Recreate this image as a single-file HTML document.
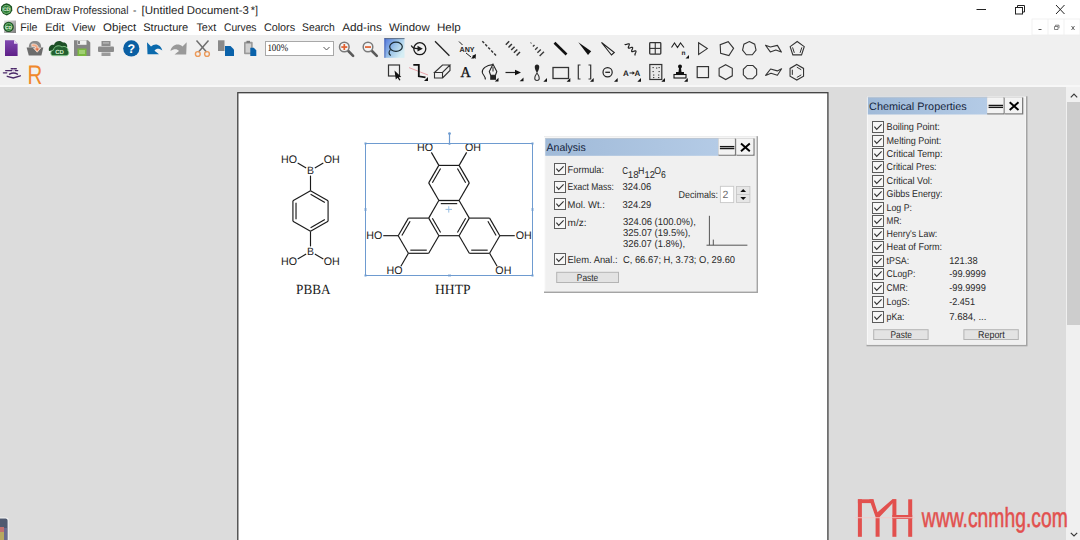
<!DOCTYPE html>
<html><head><meta charset="utf-8"><style>
html,body{margin:0;padding:0;width:1080px;height:540px;overflow:hidden;background:#dcdcdc;}
svg{display:block;}
</style></head><body>
<svg width="1080" height="540" viewBox="0 0 1080 540" shape-rendering="geometricPrecision" text-rendering="geometricPrecision">
<rect x="0" y="0" width="1080" height="35" fill="#ffffff" />
<rect x="0" y="35" width="1080" height="52" fill="#f0f0f0" />
<rect x="0" y="85" width="1080" height="2" fill="#f7f7f7" />
<rect x="0" y="87" width="1080" height="453" fill="#dcdcdc" />
<g>
<polygon points="6.5,3.3 9.5,4.3 12,6.5 12.3,10.5 10.5,13.5 6.8,15.6 3,13.8 1,10.5 1.2,6.5 3.5,4.3" fill="#1b5222"/>
<circle cx="6.6" cy="9.4" r="4.0" fill="#2a7a33" stroke="#86c888" stroke-width="0.9"/>
<text x="6.60" y="11.30" font-size="5" fill="#e8f8e0" font-family='"Liberation Sans", sans-serif' font-weight="bold" text-anchor="middle" >CD</text>
</g>
<text x="16.60" y="13.70" font-size="11.3" fill="#262626" font-family='"Liberation Sans", sans-serif' font-weight="normal" text-anchor="start" textLength="53.60" lengthAdjust="spacingAndGlyphs" >ChemDraw</text>
<text x="72.90" y="13.70" font-size="11.3" fill="#262626" font-family='"Liberation Sans", sans-serif' font-weight="normal" text-anchor="start" textLength="55.60" lengthAdjust="spacingAndGlyphs" >Professional</text>
<text x="133.00" y="13.70" font-size="11.3" fill="#262626" font-family='"Liberation Sans", sans-serif' font-weight="normal" text-anchor="start" textLength="3.40" lengthAdjust="spacingAndGlyphs" >-</text>
<text x="141.50" y="13.70" font-size="11.3" fill="#262626" font-family='"Liberation Sans", sans-serif' font-weight="normal" text-anchor="start" textLength="42.40" lengthAdjust="spacingAndGlyphs" >[Untitled</text>
<text x="186.80" y="13.70" font-size="11.3" fill="#262626" font-family='"Liberation Sans", sans-serif' font-weight="normal" text-anchor="start" textLength="62.00" lengthAdjust="spacingAndGlyphs" >Document-3</text>
<text x="250.70" y="13.70" font-size="11.3" fill="#262626" font-family='"Liberation Sans", sans-serif' font-weight="normal" text-anchor="start" textLength="7.30" lengthAdjust="spacingAndGlyphs" >*]</text>
<line x1="976.50" y1="9.50" x2="986.00" y2="9.50" stroke="#222" stroke-width="1" />
<rect x="1015.5" y="7.5" width="7" height="6.5" fill="none" stroke="#222" stroke-width="1"/>
<path d="M1017.5,7.5 V5.5 H1024.5 V12 H1022.5" fill="none" stroke="#222" stroke-width="1"/>
<line x1="1056.00" y1="5.00" x2="1064.50" y2="14.00" stroke="#222" stroke-width="1" />
<line x1="1064.50" y1="5.00" x2="1056.00" y2="14.00" stroke="#222" stroke-width="1" />
<defs><linearGradient id="gMenuIco" x1="0" y1="0" x2="1" y2="1"><stop offset="0" stop-color="#e6e6e6"/><stop offset="1" stop-color="#7c7c7c"/></linearGradient></defs>
<rect x="4" y="20.5" width="12" height="12.5" fill="url(#gMenuIco)"/>
<circle cx="8.6" cy="26.9" r="5.2" fill="#1b5222"/>
<circle cx="8.6" cy="26.9" r="3.5" fill="#2a7a33" stroke="#86c888" stroke-width="0.9"/>
<text x="8.60" y="28.70" font-size="4.5" fill="#e8f8e0" font-family='"Liberation Sans", sans-serif' font-weight="bold" text-anchor="middle" >CD</text>
<text x="20.30" y="30.70" font-size="11" fill="#262626" font-family='"Liberation Sans", sans-serif' font-weight="normal" text-anchor="start" textLength="17.10" lengthAdjust="spacingAndGlyphs" >File</text>
<text x="45.20" y="30.70" font-size="11" fill="#262626" font-family='"Liberation Sans", sans-serif' font-weight="normal" text-anchor="start" textLength="19.05" lengthAdjust="spacingAndGlyphs" >Edit</text>
<text x="72.10" y="30.70" font-size="11" fill="#262626" font-family='"Liberation Sans", sans-serif' font-weight="normal" text-anchor="start" textLength="23.40" lengthAdjust="spacingAndGlyphs" >View</text>
<text x="103.10" y="30.70" font-size="11" fill="#262626" font-family='"Liberation Sans", sans-serif' font-weight="normal" text-anchor="start" textLength="33.20" lengthAdjust="spacingAndGlyphs" >Object</text>
<text x="143.20" y="30.70" font-size="11" fill="#262626" font-family='"Liberation Sans", sans-serif' font-weight="normal" text-anchor="start" textLength="45.00" lengthAdjust="spacingAndGlyphs" >Structure</text>
<text x="196.40" y="30.70" font-size="11" fill="#262626" font-family='"Liberation Sans", sans-serif' font-weight="normal" text-anchor="start" textLength="19.90" lengthAdjust="spacingAndGlyphs" >Text</text>
<text x="224.00" y="30.70" font-size="11" fill="#262626" font-family='"Liberation Sans", sans-serif' font-weight="normal" text-anchor="start" textLength="32.50" lengthAdjust="spacingAndGlyphs" >Curves</text>
<text x="263.90" y="30.70" font-size="11" fill="#262626" font-family='"Liberation Sans", sans-serif' font-weight="normal" text-anchor="start" textLength="31.20" lengthAdjust="spacingAndGlyphs" >Colors</text>
<text x="302.00" y="30.70" font-size="11" fill="#262626" font-family='"Liberation Sans", sans-serif' font-weight="normal" text-anchor="start" textLength="32.80" lengthAdjust="spacingAndGlyphs" >Search</text>
<text x="342.20" y="30.70" font-size="11" fill="#262626" font-family='"Liberation Sans", sans-serif' font-weight="normal" text-anchor="start" textLength="39.80" lengthAdjust="spacingAndGlyphs" >Add-ins</text>
<text x="388.90" y="30.70" font-size="11" fill="#262626" font-family='"Liberation Sans", sans-serif' font-weight="normal" text-anchor="start" textLength="40.80" lengthAdjust="spacingAndGlyphs" >Window</text>
<text x="436.90" y="30.70" font-size="11" fill="#262626" font-family='"Liberation Sans", sans-serif' font-weight="normal" text-anchor="start" textLength="23.90" lengthAdjust="spacingAndGlyphs" >Help</text>
<rect x="1032" y="19" width="48" height="16" fill="#ffffff" stroke="#eeeeee" stroke-width="0.8" />
<line x1="1048.00" y1="19.00" x2="1048.00" y2="35.00" stroke="#eeeeee" stroke-width="0.8" />
<line x1="1064.00" y1="19.00" x2="1064.00" y2="35.00" stroke="#eeeeee" stroke-width="0.8" />
<line x1="1038.50" y1="29.50" x2="1041.50" y2="29.50" stroke="#555" stroke-width="1" />
<path d="M1054.5,26.5 h3.5 v3 h-3.5 z M1055.5,26.5 v-1.3 h3.5 v3" fill="none" stroke="#666" stroke-width="0.8"/>
<line x1="1071.50" y1="26.00" x2="1074.50" y2="30.00" stroke="#666" stroke-width="1" />
<line x1="1074.50" y1="26.00" x2="1071.50" y2="30.00" stroke="#666" stroke-width="1" />
<rect x="237.8" y="92.7" width="590.1" height="460" fill="#ffffff" stroke="#404040" stroke-width="1.3" />
<rect x="1066" y="87" width="14" height="453" fill="#f0f0f0" />
<rect x="1067" y="102" width="13" height="223" fill="#cdcdcd" />
<path d="M1070.8,97.3 L1074,94.1 L1077.2,97.3" fill="none" stroke="#3a3a3a" stroke-width="1.2"/>
<path d="M1070.8,532.8 L1074,536 L1077.2,532.8" fill="none" stroke="#3a3a3a" stroke-width="1.2"/>
<defs><linearGradient id="gPurple" x1="0" y1="0" x2="0" y2="1"><stop offset="0" stop-color="#8048b0"/><stop offset="1" stop-color="#5e2088"/></linearGradient><linearGradient id="gLasso" x1="0" y1="0" x2="1" y2="0.6"><stop offset="0" stop-color="#4f74dc"/><stop offset="0.55" stop-color="#9cc4e8"/><stop offset="1" stop-color="#d6eef4"/></linearGradient><linearGradient id="gBtn" x1="0" y1="0" x2="0" y2="1"><stop offset="0" stop-color="#fdfdfd"/><stop offset="1" stop-color="#e4e4e4"/></linearGradient><linearGradient id="gTitle" x1="0" y1="0" x2="1" y2="0"><stop offset="0" stop-color="#a0bad8"/><stop offset="1" stop-color="#b4cbe6"/></linearGradient></defs>
<path d="M5,40.2 H14 L17.6,43.8 V56 H5 Z" fill="url(#gPurple)"/>
<path d="M14,40.2 V43.8 H17.6" fill="#e8d8f0"/>
<path d="M28.8,47.6 C28.8,42.5 31.5,41 35,41 C38.5,41 41.2,42.5 41.2,47.6 Z" fill="#8c8c8c"/>
<path d="M26.6,47.5 H43.3 L41.4,55.5 H28.8 Z" fill="#6c6c6c"/>
<path d="M31.8,44 C35,43.6 38.2,44.5 38.4,48.2 L40.6,48.2 L37.2,52.2 L33.6,48.2 L35.8,48.2 C35.6,46.6 34.5,46.2 31.8,46.6 Z" fill="#f2a882" stroke="#fbeee6" stroke-width="0.7"/>
<path d="M35.6,48.6 L38.6,48.6 L37.2,50.6 Z" fill="#d8603e"/>
<path d="M49,51 C48,47 51,44 54,45 C55,41 60,39.5 63,42.5 C66,42 68,45 67,48 Z" fill="#1d4f26"/>
<path d="M53,55.7 C50,55.7 50,50.5 53.5,50 C54,46 59,44.5 62,47 C64,45.5 68.5,47 68,51 C69.5,52 69,55.7 66,55.7 Z" fill="#236030" stroke="#8ad090" stroke-width="0.9"/>
<text x="59.50" y="53.60" font-size="6" fill="#d8f0d0" font-family='"Liberation Sans", sans-serif' font-weight="bold" text-anchor="middle" >CD</text>
<path d="M74,40.3 H88 L90.3,42.6 V56 H74 Z" fill="#858585"/>
<rect x="77.5" y="40.3" width="9" height="4.5" fill="#f0f0f0"/>
<rect x="78" y="41" width="2" height="3" fill="#858585"/>
<rect x="77.5" y="48.5" width="9" height="7.5" fill="#7ab840"/>
<rect x="79" y="50.5" width="6" height="1" fill="#c8e8a8"/><rect x="79" y="52.5" width="6" height="1" fill="#c8e8a8"/>
<rect x="101.5" y="41" width="9" height="5" fill="#8c8c8c"/>
<rect x="98" y="46.5" width="16" height="5.5" rx="1" fill="#8c8c8c"/>
<rect x="101.5" y="52.5" width="9" height="3.5" fill="#9a9a9a"/>
<rect x="103" y="42.5" width="6" height="0.9" fill="#cfcfcf"/>
<circle cx="131.3" cy="48.4" r="8.1" fill="#0b5fa3"/>
<text x="131.30" y="52.80" font-size="12.5" fill="#ffffff" font-family='"Liberation Sans", sans-serif' font-weight="bold" text-anchor="middle" >?</text>
<path d="M147,42.3 L147.5,54.3 L159,54.3 L154.5,50.8 C156.5,48 159.5,48.5 162.3,50.5 C161,44.5 155,42.5 151,46.5 Z" fill="#0b6aad"/>
<path d="M186.7,42.3 L186.2,54.5 L174.5,54.5 L179,51 C177,48.5 173.5,49 170.5,51 C171.5,45 178,42.5 182.5,46.5 Z" fill="#999999"/>
<line x1="196.50" y1="40.50" x2="206.50" y2="52.00" stroke="#6e6e6e" stroke-width="1.5" />
<line x1="208.50" y1="40.50" x2="198.50" y2="52.00" stroke="#6e6e6e" stroke-width="1.5" />
<circle cx="197.8" cy="54" r="2.4" fill="none" stroke="#ec9a5a" stroke-width="1.4"/>
<circle cx="207" cy="54" r="2.4" fill="none" stroke="#ec9a5a" stroke-width="1.4"/>
<rect x="218" y="40.3" width="6.5" height="10.7" fill="#8a8a8a"/>
<path d="M225,46 H230.5 L234,49.5 V56 H225 Z" fill="#0a62aa"/>
<rect x="244" y="41.8" width="8.7" height="12.5" rx="1" fill="#9a9a9a"/>
<rect x="245.6" y="43.6" width="5.5" height="9" fill="#d0d0d0"/>
<rect x="246.5" y="40.8" width="3.5" height="2" fill="#777"/>
<path d="M250.3,47.7 H253.8 L256.3,50.2 V56 H250.3 Z" fill="#0a62aa"/>
<rect x="265.5" y="41.5" width="68" height="14" fill="#ffffff" stroke="#a8a8a8" stroke-width="1" />
<text x="267.40" y="51.20" font-size="10" fill="#111" font-family='"Liberation Serif", serif' font-weight="normal" text-anchor="start" textLength="20.80" lengthAdjust="spacingAndGlyphs" >100%</text>
<path d="M323.5,47 L326.5,50 L329.5,47" fill="none" stroke="#555" stroke-width="1"/>
<line x1="347.8" y1="50.5" x2="353.1" y2="55.8" stroke="#5a5a5a" stroke-width="2.6" stroke-linecap="round"/>
<circle cx="344.3" cy="47" r="4.8" fill="#f4f4f4" stroke="#7a7a7a" stroke-width="1.5"/>
<rect x="341.3" y="46.2" width="6" height="1.7" fill="#e06030"/>
<rect x="343.45" y="44" width="1.7" height="6" fill="#e06030"/>
<line x1="371.5" y1="50.5" x2="376.8" y2="55.8" stroke="#5a5a5a" stroke-width="2.6" stroke-linecap="round"/>
<circle cx="368" cy="47" r="4.8" fill="#f4f4f4" stroke="#7a7a7a" stroke-width="1.5"/>
<rect x="365" y="46.2" width="6" height="1.7" fill="#e06030"/>
<rect x="384.5" y="38.2" width="20" height="19.6" fill="url(#gLasso)"/>
<rect x="384.5" y="38.2" width="20" height="0.9" fill="#55657a"/>
<rect x="384.5" y="38.2" width="0.8" height="19.6" fill="#3a58b0"/>
<ellipse cx="396" cy="46.7" rx="6.3" ry="4.6" fill="none" stroke="#1b2b33" stroke-width="1.2"/>
<path d="M390.5,49.5 C388.5,52 388.5,54 390.8,55.5" fill="none" stroke="#1b2b33" stroke-width="1.2"/>
<circle cx="419.8" cy="48.7" r="6" fill="none" stroke="#1a1a1a" stroke-width="1.3"/>
<path d="M411.3,45.6 C412.5,48.5 414.5,48.8 418,48.7" fill="none" stroke="#1a1a1a" stroke-width="1.3"/>
<path d="M417.5,45.8 L422.8,48.7 L417.5,51.6 Z" fill="#1a1a1a"/>
<line x1="435.00" y1="41.30" x2="449.40" y2="55.70" stroke="#222" stroke-width="1.3" />
<line x1="459.00" y1="41.50" x2="462.50" y2="45.00" stroke="#222" stroke-width="1" />
<text x="467.00" y="52.00" font-size="7.2" fill="#222" font-family='"Liberation Sans", sans-serif' font-weight="bold" text-anchor="middle" textLength="15.00" lengthAdjust="spacingAndGlyphs" >ANY</text>
<line x1="466.00" y1="53.00" x2="471.00" y2="57.00" stroke="#222" stroke-width="1" />
<path d="M474,55.5 L474,58.5 L471,58.5 Z" fill="#111"/>
<path d="M472,56 L475.5,59 L476,54 Z" fill="#111"/>
<line x1="482.3" y1="41.2" x2="496" y2="55.5" stroke="#333" stroke-width="1.45" stroke-dasharray="2.6,1.7"/>
<line x1="505.80" y1="44.70" x2="509.20" y2="41.30" stroke="#333" stroke-width="1.45"/>
<line x1="508.50" y1="47.40" x2="511.90" y2="44.00" stroke="#333" stroke-width="1.45"/>
<line x1="511.20" y1="50.10" x2="514.60" y2="46.70" stroke="#333" stroke-width="1.45"/>
<line x1="513.90" y1="52.80" x2="517.30" y2="49.40" stroke="#333" stroke-width="1.45"/>
<line x1="516.60" y1="55.50" x2="520.00" y2="52.10" stroke="#333" stroke-width="1.45"/>
<line x1="530.65" y1="43.35" x2="531.35" y2="42.65" stroke="#3a3a3a" stroke-width="1.35"/>
<line x1="532.90" y1="46.50" x2="534.50" y2="44.90" stroke="#3a3a3a" stroke-width="1.35"/>
<line x1="535.15" y1="49.65" x2="537.65" y2="47.15" stroke="#3a3a3a" stroke-width="1.35"/>
<line x1="537.40" y1="52.80" x2="540.80" y2="49.40" stroke="#3a3a3a" stroke-width="1.35"/>
<line x1="539.65" y1="55.95" x2="543.95" y2="51.65" stroke="#3a3a3a" stroke-width="1.35"/>
<line x1="554.50" y1="42.80" x2="566.50" y2="54.50" stroke="#111" stroke-width="2.6" />
<path d="M578.3,42.3 L591.2,51.2 L588,55 Z" fill="#111"/>
<path d="M601.5,42.5 L614.3,52.5 L611.5,55 Z" fill="none" stroke="#222" stroke-width="1.1"/>
<polyline points="625.06,44.47 625.29,44.59 625.63,44.60 626.07,44.52 626.58,44.37 627.13,44.18 627.68,44.00 628.19,43.85 628.63,43.77 628.98,43.78 629.20,43.90 629.31,44.13 629.30,44.48 629.19,44.91 629.02,45.41 628.80,45.95 628.58,46.49 628.41,46.99 628.30,47.42 628.29,47.77 628.40,48.00 628.62,48.12 628.97,48.13 629.41,48.05 629.92,47.90 630.47,47.72 631.02,47.53 631.53,47.38 631.97,47.30 632.31,47.31 632.54,47.43 632.64,47.67 632.63,48.01 632.53,48.44 632.35,48.95 632.13,49.48 631.92,50.02 631.74,50.52 631.63,50.96 631.62,51.30 631.73,51.53 631.96,51.65 632.30,51.66 632.74,51.58 633.25,51.43 633.80,51.25 634.35,51.07 634.86,50.92 635.30,50.84 635.64,50.85 635.87,50.97 635.98,51.20 635.97,51.54 635.86,51.98 635.68,52.48 635.47,53.02 635.25,53.55 635.07,54.06 634.97,54.49 634.96,54.83 635.06,55.07" fill="none" stroke="#222" stroke-width="1.2" stroke-linejoin="round" stroke-linecap="round"/>
<rect x="649.7" y="42.7" width="11.1" height="11.4" rx="0.8" fill="none" stroke="#333" stroke-width="1.3"/>
<line x1="655.25" y1="42.70" x2="655.25" y2="54.10" stroke="#333" stroke-width="1.1" />
<line x1="649.70" y1="48.40" x2="660.80" y2="48.40" stroke="#333" stroke-width="1.1" />
<path d="M671.5,47.5 L674.5,43 L677.5,47.5 L680.5,43 L684,47.5" fill="none" stroke="#222" stroke-width="1.1"/>
<text x="683.50" y="55.00" font-size="6.5" fill="#222" font-family='"Liberation Sans", sans-serif' font-weight="bold" text-anchor="middle" >n</text>
<path d="M689,55 V58.5 H685.5 Z" fill="#111"/>
<path d="M698.6,42.8 L707.3,48.6 L698.6,54.5 Z" fill="none" stroke="#333" stroke-width="1.1"/>
<polygon points="728.19,41.65 733.59,48.32 728.92,55.52 720.63,53.29 720.18,44.72" fill="none" stroke="#333" stroke-width="1.1"/>
<polygon points="749.30,41.60 754.69,44.20 756.03,50.04 752.29,54.72 746.31,54.72 742.57,50.04 743.91,44.20" fill="none" stroke="#333" stroke-width="1.1"/>
<path d="M765.5,45.2 L770.4,47 L777.4,45.4 L781.4,52.1 L775.8,50 L770.3,51.9 Z" fill="none" stroke="#333" stroke-width="1.1" stroke-linejoin="round"/>
<polygon points="797.20,41.50 804.24,46.61 801.55,54.89 792.85,54.89 790.16,46.61" fill="none" stroke="#333" stroke-width="1.1"/>
<line x1="801.84" y1="47.39" x2="800.07" y2="52.85" stroke="#333" stroke-width="1.0" />
<line x1="794.33" y1="52.85" x2="792.56" y2="47.39" stroke="#333" stroke-width="1.0" />
<path d="M11.2,68.7 H16.3 M5.7,70.6 H11.8 M15.3,70.6 H17.7 M3.4,72.8 H6.8 M9.5,74.2 Q13.5,71.8 17.5,74.2 M7.2,76.3 L13.3,78 L20.3,75.8" fill="none" stroke="#4a2868" stroke-width="1.35" stroke-linecap="round"/>
<line x1="13.60" y1="68.80" x2="13.60" y2="71.60" stroke="#c8a8d8" stroke-width="0.9" />
<text x="27.60" y="83.60" font-size="27" fill="#f0882c" font-family='"Liberation Sans", sans-serif' font-weight="normal" text-anchor="start" textLength="14.80" lengthAdjust="spacingAndGlyphs" >R</text>
<rect x="388.5" y="65" width="11" height="11" fill="none" stroke="#333" stroke-width="1.2"/>
<path d="M394.5,70.5 L401.3,77 L398.8,77.3 L400.5,80 L399.3,80.6 L397.6,77.8 L395.8,79.5 Z" fill="#111"/>
<line x1="409.00" y1="67.60" x2="428.00" y2="75.00" stroke="#e89aa0" stroke-width="0.9" />
<path d="M413.3,64.8 H418.8 L418.8,76.3 L425.5,77.3" fill="none" stroke="#111" stroke-width="1.8"/>
<path d="M428,77 V81 H424 Z" fill="#111"/>
<path d="M434.5,72.5 L442.5,65 H450 L442.5,72.5 Z M434.5,72.5 V78 H442.5 V72.5 M442.5,78 L450,70.5 V65" fill="none" stroke="#333" stroke-width="1.1"/>
<text x="465.70" y="77.30" font-size="15" fill="#111" font-family='"Liberation Serif", serif' font-weight="normal" text-anchor="middle" textLength="10.20" lengthAdjust="spacingAndGlyphs" stroke="#111" stroke-width="0.35">A</text>
<path d="M485.2,79.5 C486,76.5 483,75.5 482.3,72.5 C481.8,69 486,65 492.8,64.6" fill="none" stroke="#222" stroke-width="1.1"/>
<path d="M493,64.3 L496.8,71.5 L495.5,75.2 H490.6 L489.3,71.5 Z" fill="none" stroke="#222" stroke-width="1.1"/>
<line x1="493.00" y1="67.00" x2="493.00" y2="71.50" stroke="#222" stroke-width="1.0" />
<rect x="490.2" y="75.2" width="5.8" height="4.6" fill="#222"/>
<path d="M498.5,77.8 V81.5 H494.8 Z" fill="#111"/>
<line x1="505.50" y1="72.50" x2="517.00" y2="72.50" stroke="#222" stroke-width="1.2" />
<path d="M515,69.8 L521,72.5 L515,75.2 Z" fill="#111"/>
<path d="M523.5,77.5 V81.3 H519.7 Z" fill="#111"/>
<path d="M537,64.5 C534,64.5 534,68.5 537,73 C540,68.5 540,64.5 537,64.5 Z" fill="#222"/>
<path d="M537,73 C534,77 534,80.5 537,80.5 C540,80.5 540,77 537,73 Z" fill="none" stroke="#333" stroke-width="1.1"/>
<path d="M547,78 V81.7 H543.3 Z" fill="#111"/>
<rect x="553" y="67.5" width="15.5" height="11" fill="none" stroke="#333" stroke-width="1.3"/>
<path d="M570.3,78 V81.7 H566.6 Z" fill="#111"/>
<path d="M580.5,65 H578.3 V79 H580.5 M588.5,65 H590.7 V79 H588.5" fill="none" stroke="#333" stroke-width="1.2"/>
<path d="M593.7,78 V81.7 H590 Z" fill="#111"/>
<circle cx="607.6" cy="72.3" r="4.6" fill="none" stroke="#222" stroke-width="1.2"/>
<line x1="605.30" y1="72.30" x2="610.00" y2="72.30" stroke="#222" stroke-width="1.3" />
<path d="M617.7,78 V81.7 H614 Z" fill="#111"/>
<text x="626.00" y="76.00" font-size="8" fill="#222" font-family='"Liberation Sans", sans-serif' font-weight="bold" text-anchor="middle" >A</text>
<text x="637.50" y="76.00" font-size="8" fill="#222" font-family='"Liberation Sans", sans-serif' font-weight="bold" text-anchor="middle" >A</text>
<line x1="629.50" y1="73.00" x2="633.50" y2="73.00" stroke="#222" stroke-width="1" />
<path d="M632.5,71.3 L635,73 L632.5,74.7 Z" fill="#222"/>
<path d="M641,78 V81.7 H637.3 Z" fill="#111"/>
<rect x="649.8" y="64.5" width="12" height="15" fill="#e8e8e8" stroke="#333" stroke-width="1.2"/>
<rect x="652.5" y="67" width="1.3" height="1.1" fill="#444"/>
<rect x="656" y="67.5" width="1.3" height="1.1" fill="#444"/>
<rect x="658.5" y="67" width="1.3" height="1.1" fill="#444"/>
<rect x="652.5" y="71" width="1.3" height="1.1" fill="#444"/>
<rect x="658.5" y="71" width="1.3" height="1.1" fill="#444"/>
<rect x="653" y="74.5" width="1.3" height="1.1" fill="#444"/>
<rect x="658" y="74.5" width="1.3" height="1.1" fill="#444"/>
<rect x="653" y="77" width="1.3" height="1.1" fill="#444"/>
<rect x="658" y="77" width="1.3" height="1.1" fill="#444"/>
<path d="M665,78 V81.7 H661.3 Z" fill="#111"/>
<circle cx="680" cy="66.5" r="2" fill="#111"/>
<path d="M679,68 H681 L681.5,72 H684 V74 H676 V72 H678.5 Z" fill="#111"/>
<rect x="674" y="74.5" width="12" height="3.5" fill="none" stroke="#111" stroke-width="1.1"/>
<path d="M687.8,78 V81.7 H684.1 Z" fill="#111"/>
<rect x="697.2" y="66.6" width="11.3" height="11" fill="none" stroke="#333" stroke-width="1.2"/>
<polygon points="725.70,64.65 732.28,68.38 732.28,75.82 725.70,79.55 719.12,75.82 719.12,68.38" fill="none" stroke="#333" stroke-width="1.1"/>
<polygon points="752.76,65.45 756.65,69.34 756.65,74.86 752.76,78.75 747.24,78.75 743.35,74.86 743.35,69.34 747.24,65.45" fill="none" stroke="#333" stroke-width="1.1"/>
<path d="M765.6,75.4 L770.6,69 L777.3,70.9 L781.6,68.8 L777.4,75.3 L771,73.3 Z" fill="none" stroke="#333" stroke-width="1.1" stroke-linejoin="round"/>
<polygon points="796.80,64.50 803.55,68.40 803.55,76.20 796.80,80.10 790.05,76.20 790.05,68.40" fill="none" stroke="#333" stroke-width="1.1"/>
<line x1="796.80" y1="67.15" x2="801.26" y2="69.73" stroke="#333" stroke-width="1.0" />
<line x1="801.26" y1="74.87" x2="796.80" y2="77.45" stroke="#333" stroke-width="1.0" />
<line x1="792.34" y1="74.87" x2="792.34" y2="69.73" stroke="#333" stroke-width="1.0" />
<line x1="328.08" y1="221.15" x2="310.50" y2="231.30" stroke="#1a1a1a" stroke-width="1.15" stroke-linecap="butt"/>
<line x1="310.50" y1="231.30" x2="292.92" y2="221.15" stroke="#1a1a1a" stroke-width="1.15" stroke-linecap="butt"/>
<line x1="292.92" y1="221.15" x2="292.92" y2="200.85" stroke="#1a1a1a" stroke-width="1.15" stroke-linecap="butt"/>
<line x1="292.92" y1="200.85" x2="310.50" y2="190.70" stroke="#1a1a1a" stroke-width="1.15" stroke-linecap="butt"/>
<line x1="310.50" y1="190.70" x2="328.08" y2="200.85" stroke="#1a1a1a" stroke-width="1.15" stroke-linecap="butt"/>
<line x1="328.08" y1="200.85" x2="328.08" y2="221.15" stroke="#1a1a1a" stroke-width="1.15" stroke-linecap="butt"/>
<line x1="310.62" y1="194.35" x2="324.86" y2="202.57" stroke="#1a1a1a" stroke-width="1.15" />
<line x1="324.86" y1="219.43" x2="310.62" y2="227.65" stroke="#1a1a1a" stroke-width="1.15" />
<line x1="296.02" y1="219.22" x2="296.02" y2="202.78" stroke="#1a1a1a" stroke-width="1.15" />
<line x1="310.50" y1="190.70" x2="310.50" y2="175.60" stroke="#1a1a1a" stroke-width="1.15" stroke-linecap="butt"/>
<line x1="310.50" y1="231.30" x2="310.50" y2="246.40" stroke="#1a1a1a" stroke-width="1.15" stroke-linecap="butt"/>
<text x="310.60" y="173.50" font-size="10.6" fill="#1a1a1a" font-family='"Liberation Sans", sans-serif' font-weight="normal" text-anchor="middle" textLength="7.00" lengthAdjust="spacingAndGlyphs" >B</text>
<line x1="306.17" y1="167.90" x2="297.68" y2="163.00" stroke="#1a1a1a" stroke-width="1.15" stroke-linecap="butt"/>
<line x1="314.83" y1="167.90" x2="323.32" y2="163.00" stroke="#1a1a1a" stroke-width="1.15" stroke-linecap="butt"/>
<text x="297.02" y="163.45" font-size="11" fill="#1a1a1a" font-family='"Liberation Sans", sans-serif' font-weight="normal" text-anchor="end" textLength="16.00" lengthAdjust="spacingAndGlyphs" >HO</text>
<text x="323.68" y="163.45" font-size="11" fill="#1a1a1a" font-family='"Liberation Sans", sans-serif' font-weight="normal" text-anchor="start" textLength="16.00" lengthAdjust="spacingAndGlyphs" >OH</text>
<text x="310.60" y="254.70" font-size="10.6" fill="#1a1a1a" font-family='"Liberation Sans", sans-serif' font-weight="normal" text-anchor="middle" textLength="7.00" lengthAdjust="spacingAndGlyphs" >B</text>
<line x1="306.17" y1="254.10" x2="297.68" y2="259.00" stroke="#1a1a1a" stroke-width="1.15" stroke-linecap="butt"/>
<line x1="314.83" y1="254.10" x2="323.32" y2="259.00" stroke="#1a1a1a" stroke-width="1.15" stroke-linecap="butt"/>
<text x="297.02" y="264.95" font-size="11" fill="#1a1a1a" font-family='"Liberation Sans", sans-serif' font-weight="normal" text-anchor="end" textLength="16.00" lengthAdjust="spacingAndGlyphs" >HO</text>
<text x="323.68" y="264.95" font-size="11" fill="#1a1a1a" font-family='"Liberation Sans", sans-serif' font-weight="normal" text-anchor="start" textLength="16.00" lengthAdjust="spacingAndGlyphs" >OH</text>
<text x="313.30" y="293.80" font-size="14" fill="#1a1a1a" font-family='"Liberation Serif", serif' font-weight="normal" text-anchor="middle" textLength="34.50" lengthAdjust="spacingAndGlyphs" >PBBA</text>
<line x1="428.70" y1="218.10" x2="438.80" y2="200.50" stroke="#1a1a1a" stroke-width="1.15" stroke-linecap="butt"/>
<line x1="469.30" y1="218.10" x2="489.60" y2="218.10" stroke="#1a1a1a" stroke-width="1.15" stroke-linecap="butt"/>
<line x1="438.90" y1="235.70" x2="459.10" y2="235.70" stroke="#1a1a1a" stroke-width="1.15" stroke-linecap="butt"/>
<line x1="459.10" y1="235.70" x2="469.30" y2="253.30" stroke="#1a1a1a" stroke-width="1.15" stroke-linecap="butt"/>
<line x1="438.90" y1="200.50" x2="459.10" y2="200.50" stroke="#1a1a1a" stroke-width="1.15" stroke-linecap="butt"/>
<line x1="428.70" y1="253.30" x2="438.90" y2="235.70" stroke="#1a1a1a" stroke-width="1.15" stroke-linecap="butt"/>
<line x1="459.10" y1="235.70" x2="469.30" y2="218.10" stroke="#1a1a1a" stroke-width="1.15" stroke-linecap="butt"/>
<line x1="459.10" y1="200.50" x2="469.30" y2="182.90" stroke="#1a1a1a" stroke-width="1.15" stroke-linecap="butt"/>
<line x1="438.80" y1="165.40" x2="459.10" y2="165.40" stroke="#1a1a1a" stroke-width="1.15" stroke-linecap="butt"/>
<line x1="428.70" y1="182.90" x2="438.80" y2="165.40" stroke="#1a1a1a" stroke-width="1.15" stroke-linecap="butt"/>
<line x1="459.10" y1="165.40" x2="469.30" y2="182.90" stroke="#1a1a1a" stroke-width="1.15" stroke-linecap="butt"/>
<line x1="489.60" y1="253.30" x2="499.80" y2="235.70" stroke="#1a1a1a" stroke-width="1.15" stroke-linecap="butt"/>
<line x1="398.20" y1="235.70" x2="408.40" y2="253.30" stroke="#1a1a1a" stroke-width="1.15" stroke-linecap="butt"/>
<line x1="438.80" y1="200.50" x2="459.10" y2="200.50" stroke="#1a1a1a" stroke-width="1.15" stroke-linecap="butt"/>
<line x1="408.40" y1="253.30" x2="428.70" y2="253.30" stroke="#1a1a1a" stroke-width="1.15" stroke-linecap="butt"/>
<line x1="469.30" y1="253.30" x2="489.60" y2="253.30" stroke="#1a1a1a" stroke-width="1.15" stroke-linecap="butt"/>
<line x1="489.60" y1="218.10" x2="499.80" y2="235.70" stroke="#1a1a1a" stroke-width="1.15" stroke-linecap="butt"/>
<line x1="459.10" y1="200.50" x2="469.30" y2="218.10" stroke="#1a1a1a" stroke-width="1.15" stroke-linecap="butt"/>
<line x1="428.70" y1="218.10" x2="438.90" y2="235.70" stroke="#1a1a1a" stroke-width="1.15" stroke-linecap="butt"/>
<line x1="408.40" y1="218.10" x2="428.70" y2="218.10" stroke="#1a1a1a" stroke-width="1.15" stroke-linecap="butt"/>
<line x1="398.20" y1="235.70" x2="408.40" y2="218.10" stroke="#1a1a1a" stroke-width="1.15" stroke-linecap="butt"/>
<line x1="428.70" y1="182.90" x2="438.90" y2="200.50" stroke="#1a1a1a" stroke-width="1.15" stroke-linecap="butt"/>
<line x1="440.78" y1="203.62" x2="457.22" y2="203.62" stroke="#1a1a1a" stroke-width="1.15" />
<line x1="440.57" y1="232.46" x2="432.35" y2="218.22" stroke="#1a1a1a" stroke-width="1.15" />
<line x1="465.65" y1="218.22" x2="457.43" y2="232.46" stroke="#1a1a1a" stroke-width="1.15" />
<line x1="432.35" y1="182.82" x2="440.57" y2="168.58" stroke="#1a1a1a" stroke-width="1.15" />
<line x1="457.43" y1="168.58" x2="465.65" y2="182.82" stroke="#1a1a1a" stroke-width="1.15" />
<line x1="401.90" y1="235.56" x2="410.12" y2="221.32" stroke="#1a1a1a" stroke-width="1.15" />
<line x1="426.77" y1="250.16" x2="410.33" y2="250.16" stroke="#1a1a1a" stroke-width="1.15" />
<line x1="487.88" y1="221.32" x2="496.10" y2="235.56" stroke="#1a1a1a" stroke-width="1.15" />
<line x1="487.67" y1="250.16" x2="471.23" y2="250.16" stroke="#1a1a1a" stroke-width="1.15" />
<line x1="438.85" y1="165.36" x2="431.35" y2="152.37" stroke="#1a1a1a" stroke-width="1.15" stroke-linecap="butt"/>
<text x="433.00" y="150.98" font-size="11" fill="#1a1a1a" font-family='"Liberation Sans", sans-serif' font-weight="normal" text-anchor="end" textLength="16.00" lengthAdjust="spacingAndGlyphs" >HO</text>
<line x1="459.15" y1="165.36" x2="466.65" y2="152.37" stroke="#1a1a1a" stroke-width="1.15" stroke-linecap="butt"/>
<text x="464.90" y="150.98" font-size="11" fill="#1a1a1a" font-family='"Liberation Sans", sans-serif' font-weight="normal" text-anchor="start" textLength="16.00" lengthAdjust="spacingAndGlyphs" >OH</text>
<line x1="398.25" y1="235.68" x2="383.25" y2="235.68" stroke="#1a1a1a" stroke-width="1.15" stroke-linecap="butt"/>
<text x="382.25" y="238.88" font-size="11" fill="#1a1a1a" font-family='"Liberation Sans", sans-serif' font-weight="normal" text-anchor="end" textLength="16.00" lengthAdjust="spacingAndGlyphs" >HO</text>
<line x1="408.40" y1="253.26" x2="400.90" y2="266.25" stroke="#1a1a1a" stroke-width="1.15" stroke-linecap="butt"/>
<text x="402.55" y="274.04" font-size="11" fill="#1a1a1a" font-family='"Liberation Sans", sans-serif' font-weight="normal" text-anchor="end" textLength="16.00" lengthAdjust="spacingAndGlyphs" >HO</text>
<line x1="499.75" y1="235.68" x2="514.75" y2="235.68" stroke="#1a1a1a" stroke-width="1.15" stroke-linecap="butt"/>
<text x="515.65" y="238.88" font-size="11" fill="#1a1a1a" font-family='"Liberation Sans", sans-serif' font-weight="normal" text-anchor="start" textLength="16.00" lengthAdjust="spacingAndGlyphs" >OH</text>
<line x1="489.60" y1="253.26" x2="497.10" y2="266.25" stroke="#1a1a1a" stroke-width="1.15" stroke-linecap="butt"/>
<text x="495.35" y="274.04" font-size="11" fill="#1a1a1a" font-family='"Liberation Sans", sans-serif' font-weight="normal" text-anchor="start" textLength="16.00" lengthAdjust="spacingAndGlyphs" >OH</text>
<text x="452.80" y="293.90" font-size="14" fill="#1a1a1a" font-family='"Liberation Serif", serif' font-weight="normal" text-anchor="middle" textLength="35.50" lengthAdjust="spacingAndGlyphs" >HHTP</text>
<rect x="365.5" y="143.5" width="167" height="132" fill="none" stroke="#6e9bd0" stroke-width="1"/>
<line x1="449.50" y1="133.50" x2="449.50" y2="143.50" stroke="#6e9bd0" stroke-width="1.2" />
<circle cx="449.5" cy="133.6" r="1.4" fill="#6e9bd0"/>
<line x1="365.50" y1="208.00" x2="365.50" y2="211.00" stroke="#6e9bd0" stroke-width="1.8" />
<line x1="532.50" y1="208.00" x2="532.50" y2="211.00" stroke="#6e9bd0" stroke-width="1.8" />
<line x1="448.00" y1="275.50" x2="451.00" y2="275.50" stroke="#6e9bd0" stroke-width="1.8" />
<line x1="449.50" y1="143.00" x2="449.50" y2="144.80" stroke="#6e9bd0" stroke-width="1.8" />
<rect x="364.5" y="142.5" width="2" height="2" fill="#6e9bd0"/>
<rect x="531.5" y="142.5" width="2" height="2" fill="#6e9bd0"/>
<rect x="364.5" y="274.5" width="2" height="2" fill="#6e9bd0"/>
<rect x="531.5" y="274.5" width="2" height="2" fill="#6e9bd0"/>
<line x1="445.50" y1="209.40" x2="452.00" y2="209.40" stroke="#8cb8e0" stroke-width="0.9" />
<line x1="448.75" y1="206.20" x2="448.75" y2="212.60" stroke="#8cb8e0" stroke-width="0.9" />
<rect x="544" y="136.2" width="214.0" height="156.8" fill="#a4a4a4" />
<rect x="544" y="136.2" width="212.5" height="155.3" fill="#fbfbfb" />
<rect x="545.3" y="137.5" width="210.7" height="153.5" fill="#f0f0f0" />
<rect x="545.3" y="138.1" width="173.20" height="17.70" fill="url(#gTitle)"/>
<rect x="545.3" y="138.1" width="173.20" height="0.9" fill="#bcc6d2"/>
<text x="546.60" y="150.80" font-size="10.8" fill="#14243c" font-family='"Liberation Sans", sans-serif' font-weight="normal" text-anchor="start" textLength="39.10" lengthAdjust="spacingAndGlyphs" >Analysis</text>
<rect x="718.5" y="138.5" width="17.5" height="17.3" fill="#7c7c7c"/>
<rect x="718.5" y="138.5" width="16.20" height="16.00" fill="#ffffff"/>
<rect x="719.20" y="139.20" width="15.40" height="15.20" fill="#f3f3f3"/>
<rect x="736.4" y="138.5" width="18.2" height="17.3" fill="#7c7c7c"/>
<rect x="736.4" y="138.5" width="16.90" height="16.00" fill="#ffffff"/>
<rect x="737.10" y="139.20" width="16.10" height="15.20" fill="#f3f3f3"/>
<rect x="719.9" y="145.939" width="14.4" height="1.35" fill="#161616" />
<rect x="719.9" y="147.88899999999998" width="14.4" height="1.35" fill="#161616" />
<path d="M741.00,143.42 L749.80,151.22 M749.80,143.42 L741.00,151.22" stroke="#000" stroke-width="1.9"/>
<rect x="554.5" y="163.5" width="11" height="11" fill="#f7f7f7" stroke="#5c5c5c" stroke-width="1"/>
<path d="M556.40,168.70 L558.70,171.30 L563.60,166.40" fill="none" stroke="#333" stroke-width="1.15"/>
<text x="567.60" y="172.70" font-size="9.9" fill="#2a2a2a" font-family='"Liberation Sans", sans-serif' font-weight="normal" text-anchor="start" textLength="36.50" lengthAdjust="spacingAndGlyphs" >Formula:</text>
<rect x="554.5" y="181.5" width="11" height="11" fill="#f7f7f7" stroke="#5c5c5c" stroke-width="1"/>
<path d="M556.40,186.70 L558.70,189.30 L563.60,184.40" fill="none" stroke="#333" stroke-width="1.15"/>
<text x="567.60" y="190.30" font-size="9.9" fill="#2a2a2a" font-family='"Liberation Sans", sans-serif' font-weight="normal" text-anchor="start" textLength="46.20" lengthAdjust="spacingAndGlyphs" >Exact Mass:</text>
<rect x="554.5" y="198.5" width="11" height="11" fill="#f7f7f7" stroke="#5c5c5c" stroke-width="1"/>
<path d="M556.40,203.70 L558.70,206.30 L563.60,201.40" fill="none" stroke="#333" stroke-width="1.15"/>
<text x="567.60" y="207.50" font-size="9.9" fill="#2a2a2a" font-family='"Liberation Sans", sans-serif' font-weight="normal" text-anchor="start" textLength="37.20" lengthAdjust="spacingAndGlyphs" >Mol. Wt.:</text>
<rect x="554.5" y="217.5" width="11" height="11" fill="#f7f7f7" stroke="#5c5c5c" stroke-width="1"/>
<path d="M556.40,222.70 L558.70,225.30 L563.60,220.40" fill="none" stroke="#333" stroke-width="1.15"/>
<text x="567.60" y="226.00" font-size="9.9" fill="#2a2a2a" font-family='"Liberation Sans", sans-serif' font-weight="normal" text-anchor="start" textLength="18.90" lengthAdjust="spacingAndGlyphs" >m/z:</text>
<rect x="554.5" y="253.5" width="11" height="11" fill="#f7f7f7" stroke="#5c5c5c" stroke-width="1"/>
<path d="M556.40,258.70 L558.70,261.30 L563.60,256.40" fill="none" stroke="#333" stroke-width="1.15"/>
<text x="567.60" y="262.60" font-size="9.9" fill="#2a2a2a" font-family='"Liberation Sans", sans-serif' font-weight="normal" text-anchor="start" textLength="50.00" lengthAdjust="spacingAndGlyphs" >Elem. Anal.:</text>
<text x="622.30" y="173.70" font-size="9.9" fill="#2a2a2a" font-family='"Liberation Sans", sans-serif' font-weight="normal" text-anchor="start" textLength="5.80" lengthAdjust="spacingAndGlyphs" >C</text>
<text x="627.80" y="177.50" font-size="9.9" fill="#2a2a2a" font-family='"Liberation Sans", sans-serif' font-weight="normal" text-anchor="start" textLength="10.80" lengthAdjust="spacingAndGlyphs" >18</text>
<text x="637.90" y="173.70" font-size="9.9" fill="#2a2a2a" font-family='"Liberation Sans", sans-serif' font-weight="normal" text-anchor="start" textLength="6.40" lengthAdjust="spacingAndGlyphs" >H</text>
<text x="644.60" y="177.50" font-size="9.9" fill="#2a2a2a" font-family='"Liberation Sans", sans-serif' font-weight="normal" text-anchor="start" textLength="10.40" lengthAdjust="spacingAndGlyphs" >12</text>
<text x="654.30" y="173.70" font-size="9.9" fill="#2a2a2a" font-family='"Liberation Sans", sans-serif' font-weight="normal" text-anchor="start" textLength="6.80" lengthAdjust="spacingAndGlyphs" >O</text>
<text x="661.10" y="177.50" font-size="9.9" fill="#2a2a2a" font-family='"Liberation Sans", sans-serif' font-weight="normal" text-anchor="start" textLength="4.80" lengthAdjust="spacingAndGlyphs" >6</text>
<text x="622.50" y="189.70" font-size="9.9" fill="#2a2a2a" font-family='"Liberation Sans", sans-serif' font-weight="normal" text-anchor="start" textLength="28.80" lengthAdjust="spacingAndGlyphs" >324.06</text>
<text x="622.50" y="207.50" font-size="9.9" fill="#2a2a2a" font-family='"Liberation Sans", sans-serif' font-weight="normal" text-anchor="start" textLength="28.80" lengthAdjust="spacingAndGlyphs" >324.29</text>
<text x="622.90" y="225.30" font-size="9.9" fill="#2a2a2a" font-family='"Liberation Sans", sans-serif' font-weight="normal" text-anchor="start" textLength="72.90" lengthAdjust="spacingAndGlyphs" >324.06 (100.0%),</text>
<text x="622.90" y="236.00" font-size="9.9" fill="#2a2a2a" font-family='"Liberation Sans", sans-serif' font-weight="normal" text-anchor="start" textLength="67.60" lengthAdjust="spacingAndGlyphs" >325.07 (19.5%),</text>
<text x="622.90" y="246.60" font-size="9.9" fill="#2a2a2a" font-family='"Liberation Sans", sans-serif' font-weight="normal" text-anchor="start" textLength="62.20" lengthAdjust="spacingAndGlyphs" >326.07 (1.8%),</text>
<text x="622.90" y="262.50" font-size="9.9" fill="#2a2a2a" font-family='"Liberation Sans", sans-serif' font-weight="normal" text-anchor="start" textLength="112.20" lengthAdjust="spacingAndGlyphs" >C, 66.67; H, 3.73; O, 29.60</text>
<text x="678.60" y="197.90" font-size="9.9" fill="#2a2a2a" font-family='"Liberation Sans", sans-serif' font-weight="normal" text-anchor="start" textLength="39.30" lengthAdjust="spacingAndGlyphs" >Decimals:</text>
<rect x="720.4" y="186.3" width="13.3" height="16.3" fill="#ffffff" stroke="#c8c8c8" stroke-width="0.9"/>
<text x="722.60" y="197.60" font-size="10.5" fill="#6a6a6a" font-family='"Liberation Sans", sans-serif' font-weight="normal" text-anchor="start" font-weight="normal">2</text>
<rect x="736.6" y="186.5" width="13.3" height="16" fill="#e6e6e6" stroke="#c4c4c4" stroke-width="0.8"/>
<line x1="736.60" y1="194.50" x2="749.90" y2="194.50" stroke="#c4c4c4" stroke-width="0.8" />
<path d="M740.3,192 L743.2,189 L746.1,192 Z" fill="#111"/>
<path d="M740.3,197 L743.2,200 L746.1,197 Z" fill="#111"/>
<line x1="709.40" y1="215.80" x2="709.40" y2="245.20" stroke="#555" stroke-width="1.0" />
<line x1="706.50" y1="245.20" x2="747.40" y2="245.20" stroke="#555" stroke-width="1.0" />
<line x1="713.30" y1="239.60" x2="713.30" y2="245.20" stroke="#555" stroke-width="1.0" />
<rect x="556.70" y="272.30" width="61.80" height="10.20" fill="#e3e3e3" stroke="#b4b4b4" stroke-width="1"/>
<text x="576.80" y="281.00" font-size="9.9" fill="#2a2a2a" font-family='"Liberation Sans", sans-serif' font-weight="normal" text-anchor="start" textLength="21.40" lengthAdjust="spacingAndGlyphs" >Paste</text>
<rect x="866.5" y="96.3" width="161.0" height="250.0" fill="#a4a4a4" />
<rect x="866.5" y="96.3" width="159.5" height="248.5" fill="#fbfbfb" />
<rect x="867.8" y="97.6" width="157.7" height="246.7" fill="#f0f0f0" />
<rect x="867.8" y="96.9" width="119.40" height="17.60" fill="url(#gTitle)"/>
<rect x="867.8" y="96.9" width="119.40" height="0.9" fill="#bcc6d2"/>
<text x="869.10" y="110.00" font-size="10.8" fill="#14243c" font-family='"Liberation Sans", sans-serif' font-weight="normal" text-anchor="start" textLength="97.60" lengthAdjust="spacingAndGlyphs" >Chemical Properties</text>
<rect x="987.2" y="97.4" width="17.5" height="17.1" fill="#7c7c7c"/>
<rect x="987.2" y="97.4" width="16.20" height="15.80" fill="#ffffff"/>
<rect x="987.90" y="98.10" width="15.40" height="15.00" fill="#f3f3f3"/>
<rect x="1005.1" y="97.4" width="18.2" height="17.1" fill="#7c7c7c"/>
<rect x="1005.1" y="97.4" width="16.90" height="15.80" fill="#ffffff"/>
<rect x="1005.80" y="98.10" width="16.10" height="15.00" fill="#f3f3f3"/>
<rect x="988.6" y="104.753" width="14.4" height="1.35" fill="#161616" />
<rect x="988.6" y="106.703" width="14.4" height="1.35" fill="#161616" />
<path d="M1009.70,102.22 L1018.50,110.02 M1018.50,102.22 L1009.70,110.02" stroke="#000" stroke-width="1.9"/>
<rect x="872.5" y="121.5" width="11" height="11" fill="#f7f7f7" stroke="#5c5c5c" stroke-width="1"/>
<path d="M874.40,126.70 L876.70,129.30 L881.60,124.40" fill="none" stroke="#333" stroke-width="1.15"/>
<text x="886.60" y="130.20" font-size="9.9" fill="#2a2a2a" font-family='"Liberation Sans", sans-serif' font-weight="normal" text-anchor="start" textLength="53.10" lengthAdjust="spacingAndGlyphs" >Boiling Point:</text>
<rect x="872.5" y="135.5" width="11" height="11" fill="#f7f7f7" stroke="#5c5c5c" stroke-width="1"/>
<path d="M874.40,140.70 L876.70,143.30 L881.60,138.40" fill="none" stroke="#333" stroke-width="1.15"/>
<text x="886.60" y="143.60" font-size="9.9" fill="#2a2a2a" font-family='"Liberation Sans", sans-serif' font-weight="normal" text-anchor="start" textLength="54.70" lengthAdjust="spacingAndGlyphs" >Melting Point:</text>
<rect x="872.5" y="148.5" width="11" height="11" fill="#f7f7f7" stroke="#5c5c5c" stroke-width="1"/>
<path d="M874.40,153.70 L876.70,156.30 L881.60,151.40" fill="none" stroke="#333" stroke-width="1.15"/>
<text x="886.60" y="157.10" font-size="9.9" fill="#2a2a2a" font-family='"Liberation Sans", sans-serif' font-weight="normal" text-anchor="start" textLength="55.90" lengthAdjust="spacingAndGlyphs" >Critical Temp:</text>
<rect x="872.5" y="161.5" width="11" height="11" fill="#f7f7f7" stroke="#5c5c5c" stroke-width="1"/>
<path d="M874.40,166.70 L876.70,169.30 L881.60,164.40" fill="none" stroke="#333" stroke-width="1.15"/>
<text x="886.60" y="170.30" font-size="9.9" fill="#2a2a2a" font-family='"Liberation Sans", sans-serif' font-weight="normal" text-anchor="start" textLength="49.90" lengthAdjust="spacingAndGlyphs" >Critical Pres:</text>
<rect x="872.5" y="175.5" width="11" height="11" fill="#f7f7f7" stroke="#5c5c5c" stroke-width="1"/>
<path d="M874.40,180.70 L876.70,183.30 L881.60,178.40" fill="none" stroke="#333" stroke-width="1.15"/>
<text x="886.60" y="184.10" font-size="9.9" fill="#2a2a2a" font-family='"Liberation Sans", sans-serif' font-weight="normal" text-anchor="start" textLength="45.80" lengthAdjust="spacingAndGlyphs" >Critical Vol:</text>
<rect x="872.5" y="188.5" width="11" height="11" fill="#f7f7f7" stroke="#5c5c5c" stroke-width="1"/>
<path d="M874.40,193.70 L876.70,196.30 L881.60,191.40" fill="none" stroke="#333" stroke-width="1.15"/>
<text x="886.60" y="197.30" font-size="9.9" fill="#2a2a2a" font-family='"Liberation Sans", sans-serif' font-weight="normal" text-anchor="start" textLength="55.90" lengthAdjust="spacingAndGlyphs" >Gibbs Energy:</text>
<rect x="872.5" y="202.5" width="11" height="11" fill="#f7f7f7" stroke="#5c5c5c" stroke-width="1"/>
<path d="M874.40,207.70 L876.70,210.30 L881.60,205.40" fill="none" stroke="#333" stroke-width="1.15"/>
<text x="886.60" y="210.50" font-size="9.9" fill="#2a2a2a" font-family='"Liberation Sans", sans-serif' font-weight="normal" text-anchor="start" textLength="25.40" lengthAdjust="spacingAndGlyphs" >Log P:</text>
<rect x="872.5" y="215.5" width="11" height="11" fill="#f7f7f7" stroke="#5c5c5c" stroke-width="1"/>
<path d="M874.40,220.70 L876.70,223.30 L881.60,218.40" fill="none" stroke="#333" stroke-width="1.15"/>
<text x="886.60" y="223.80" font-size="9.9" fill="#2a2a2a" font-family='"Liberation Sans", sans-serif' font-weight="normal" text-anchor="start" textLength="15.00" lengthAdjust="spacingAndGlyphs" >MR:</text>
<rect x="872.5" y="228.5" width="11" height="11" fill="#f7f7f7" stroke="#5c5c5c" stroke-width="1"/>
<path d="M874.40,233.70 L876.70,236.30 L881.60,231.40" fill="none" stroke="#333" stroke-width="1.15"/>
<text x="886.60" y="237.00" font-size="9.9" fill="#2a2a2a" font-family='"Liberation Sans", sans-serif' font-weight="normal" text-anchor="start" textLength="50.60" lengthAdjust="spacingAndGlyphs" >Henry's Law:</text>
<rect x="872.5" y="241.5" width="11" height="11" fill="#f7f7f7" stroke="#5c5c5c" stroke-width="1"/>
<path d="M874.40,246.70 L876.70,249.30 L881.60,244.40" fill="none" stroke="#333" stroke-width="1.15"/>
<text x="886.60" y="250.30" font-size="9.9" fill="#2a2a2a" font-family='"Liberation Sans", sans-serif' font-weight="normal" text-anchor="start" textLength="55.50" lengthAdjust="spacingAndGlyphs" >Heat of Form:</text>
<rect x="872.5" y="255.5" width="11" height="11" fill="#f7f7f7" stroke="#5c5c5c" stroke-width="1"/>
<path d="M874.40,260.70 L876.70,263.30 L881.60,258.40" fill="none" stroke="#333" stroke-width="1.15"/>
<text x="886.60" y="264.10" font-size="9.9" fill="#2a2a2a" font-family='"Liberation Sans", sans-serif' font-weight="normal" text-anchor="start" textLength="22.60" lengthAdjust="spacingAndGlyphs" >tPSA:</text>
<text x="949.20" y="264.10" font-size="9.9" fill="#2a2a2a" font-family='"Liberation Sans", sans-serif' font-weight="normal" text-anchor="start" textLength="28.50" lengthAdjust="spacingAndGlyphs" >121.38</text>
<rect x="872.5" y="268.5" width="11" height="11" fill="#f7f7f7" stroke="#5c5c5c" stroke-width="1"/>
<path d="M874.40,273.70 L876.70,276.30 L881.60,271.40" fill="none" stroke="#333" stroke-width="1.15"/>
<text x="886.60" y="277.30" font-size="9.9" fill="#2a2a2a" font-family='"Liberation Sans", sans-serif' font-weight="normal" text-anchor="start" textLength="28.70" lengthAdjust="spacingAndGlyphs" >CLogP:</text>
<text x="949.20" y="277.30" font-size="9.9" fill="#2a2a2a" font-family='"Liberation Sans", sans-serif' font-weight="normal" text-anchor="start" textLength="36.60" lengthAdjust="spacingAndGlyphs" >-99.9999</text>
<rect x="872.5" y="282.5" width="11" height="11" fill="#f7f7f7" stroke="#5c5c5c" stroke-width="1"/>
<path d="M874.40,287.70 L876.70,290.30 L881.60,285.40" fill="none" stroke="#333" stroke-width="1.15"/>
<text x="886.60" y="290.90" font-size="9.9" fill="#2a2a2a" font-family='"Liberation Sans", sans-serif' font-weight="normal" text-anchor="start" textLength="21.30" lengthAdjust="spacingAndGlyphs" >CMR:</text>
<text x="949.20" y="290.90" font-size="9.9" fill="#2a2a2a" font-family='"Liberation Sans", sans-serif' font-weight="normal" text-anchor="start" textLength="36.60" lengthAdjust="spacingAndGlyphs" >-99.9999</text>
<rect x="872.5" y="296.5" width="11" height="11" fill="#f7f7f7" stroke="#5c5c5c" stroke-width="1"/>
<path d="M874.40,301.70 L876.70,304.30 L881.60,299.40" fill="none" stroke="#333" stroke-width="1.15"/>
<text x="886.60" y="304.80" font-size="9.9" fill="#2a2a2a" font-family='"Liberation Sans", sans-serif' font-weight="normal" text-anchor="start" textLength="23.00" lengthAdjust="spacingAndGlyphs" >LogS:</text>
<text x="949.20" y="304.80" font-size="9.9" fill="#2a2a2a" font-family='"Liberation Sans", sans-serif' font-weight="normal" text-anchor="start" textLength="25.80" lengthAdjust="spacingAndGlyphs" >-2.451</text>
<rect x="872.5" y="311.5" width="11" height="11" fill="#f7f7f7" stroke="#5c5c5c" stroke-width="1"/>
<path d="M874.40,316.70 L876.70,319.30 L881.60,314.40" fill="none" stroke="#333" stroke-width="1.15"/>
<text x="886.60" y="319.90" font-size="9.9" fill="#2a2a2a" font-family='"Liberation Sans", sans-serif' font-weight="normal" text-anchor="start" textLength="17.90" lengthAdjust="spacingAndGlyphs" >pKa:</text>
<text x="949.20" y="319.90" font-size="9.9" fill="#2a2a2a" font-family='"Liberation Sans", sans-serif' font-weight="normal" text-anchor="start" textLength="37.20" lengthAdjust="spacingAndGlyphs" >7.684, ...</text>
<rect x="873.70" y="329.70" width="54.40" height="9.80" fill="#e3e3e3" stroke="#b4b4b4" stroke-width="1"/>
<text x="890.50" y="337.80" font-size="9.9" fill="#2a2a2a" font-family='"Liberation Sans", sans-serif' font-weight="normal" text-anchor="start" textLength="21.40" lengthAdjust="spacingAndGlyphs" >Paste</text>
<rect x="963.90" y="329.70" width="54.40" height="9.80" fill="#e3e3e3" stroke="#b4b4b4" stroke-width="1"/>
<text x="978.10" y="337.80" font-size="9.9" fill="#2a2a2a" font-family='"Liberation Sans", sans-serif' font-weight="normal" text-anchor="start" textLength="26.70" lengthAdjust="spacingAndGlyphs" >Report</text>
<!--PROPS-->
<g fill="#e2504e">
<rect x="857.9" y="499.3" width="4.0" height="37.5"/>
<rect x="857.9" y="499.3" width="15.5" height="3.8"/>
<path d="M869.3,499.3 H873.4 L877.5,512.2 L892.4,499.3 H896.4 L879.6,517 V536.8 H875.6 V517 Z"/>
<rect x="892.4" y="499.3" width="4.0" height="37.5"/>
<rect x="908.2" y="499.3" width="4.0" height="37.5"/>
<rect x="892.4" y="515.0" width="19.8" height="4.0"/>
</g>
<rect x="855" y="517.3" width="60" height="0.9" fill="#f4c8c6" />
<text x="921.80" y="527.40" font-size="27.5" fill="#e2504e" font-family='"Liberation Sans", sans-serif' font-weight="normal" text-anchor="start" textLength="146.00" lengthAdjust="spacingAndGlyphs" stroke="#e2504e" stroke-width="0.55">www.cnmhg.com</text>
<rect x="-4" y="518" width="12.2" height="26" rx="2.5" fill="#505a70" stroke="#f4f4f4" stroke-width="1.2"/>
<rect x="0" y="527" width="4" height="13" fill="#c07070"/>
<rect x="0" y="532" width="4" height="8" fill="#b8a860"/>
<rect x="4" y="528" width="3" height="12" fill="#6a6a90"/>
</svg>
</body></html>
